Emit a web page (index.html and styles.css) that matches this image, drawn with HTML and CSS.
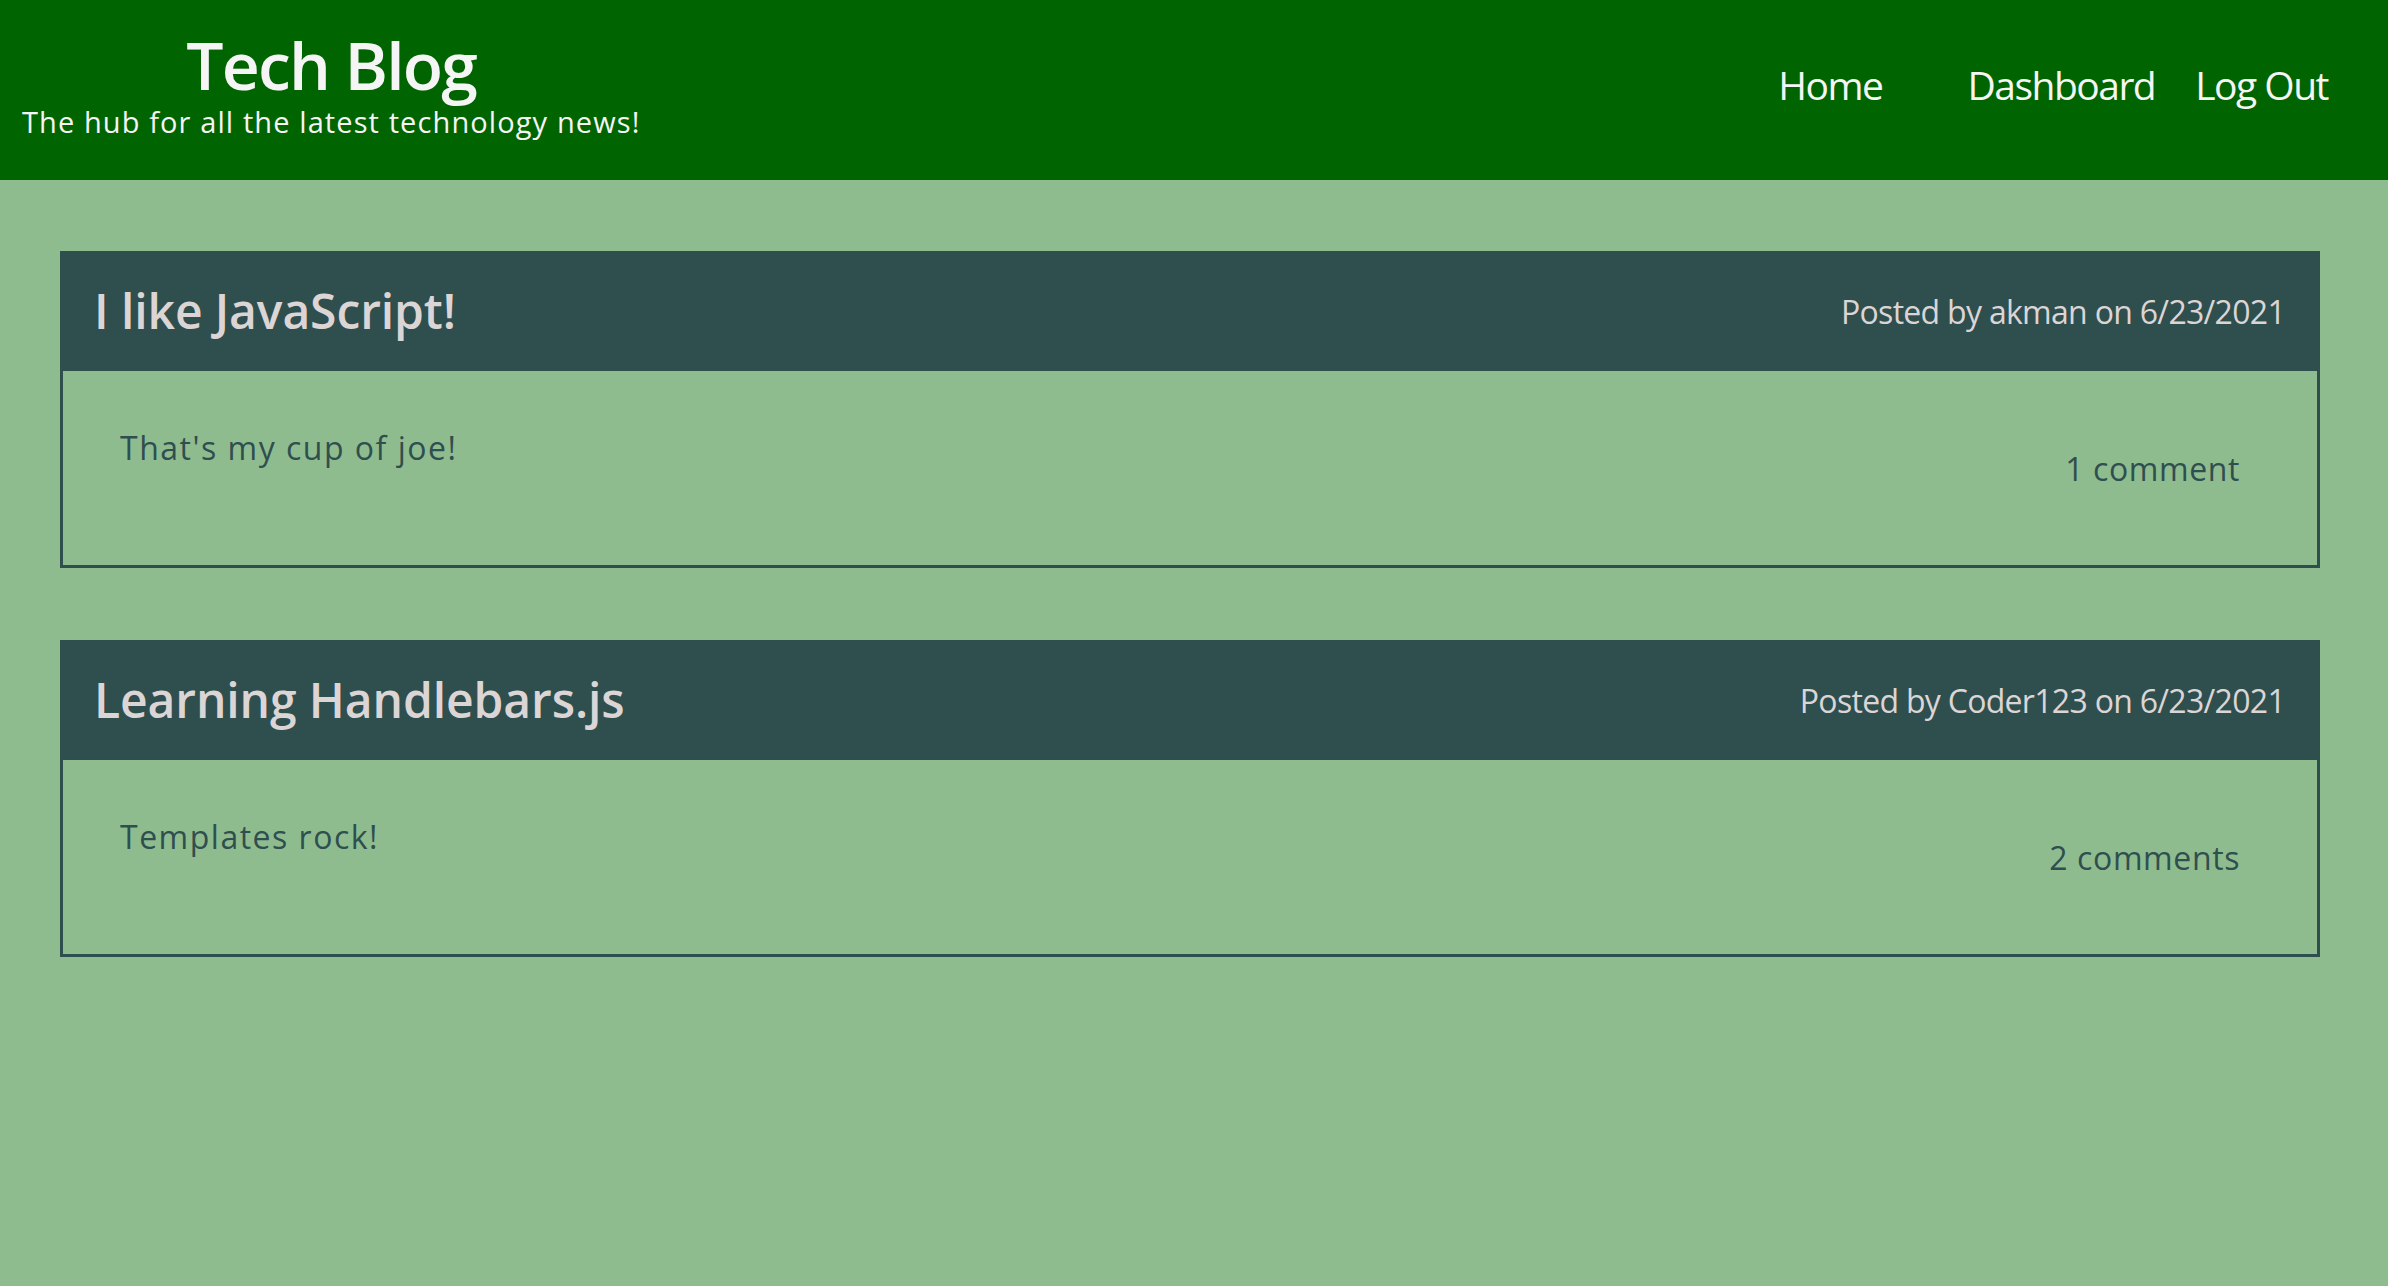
FILE: index.html
```html
<!DOCTYPE html>
<html lang="en">
<head>
<meta charset="utf-8">
<title>Tech Blog</title>
<link rel="stylesheet" href="styles.css">
</head>
<body>
<header class="site-header">
  <div class="brand">
    <h1 class="brand-title">Tech Blog</h1>
    <p class="brand-tagline">The hub for all the latest technology news!</p>
  </div>
  <nav class="nav">
    <a class="nav-link nav-home" href="#">Home</a>
    <a class="nav-link nav-dash" href="#">Dashboard</a>
    <a class="nav-link" href="#">Log Out</a>
  </nav>
</header>
<main class="posts">
  <article class="post">
    <div class="post-head">
      <h2 class="post-title">I like JavaScript!</h2>
      <span class="post-meta">Posted by akman on 6/23/2021</span>
    </div>
    <div class="post-body">
      <p class="post-text">That's my cup of joe!</p>
      <span class="post-comments">1 comment</span>
    </div>
  </article>
  <article class="post">
    <div class="post-head">
      <h2 class="post-title">Learning Handlebars.js</h2>
      <span class="post-meta">Posted by Coder123 on 6/23/2021</span>
    </div>
    <div class="post-body">
      <p class="post-text">Templates rock!</p>
      <span class="post-comments">2 comments</span>
    </div>
  </article>
</main>
</body>
</html>
```
FILE: styles.css
```css
* { box-sizing: border-box; }
html, body { margin: 0; padding: 0; }
body {
  background: #8fbc8f;
  font-family: "Open Sans", Lato, sans-serif;
  min-height: 1286px;
}
.site-header {
  height: 180px;
  background: #006400;
  color: #f5f5f5;
  display: flex;
  justify-content: space-between;
  align-items: flex-start;
  padding: 0 60px 0 22px;
}
.brand {
  text-align: center;
  padding-top: 31px;
}
.brand-title {
  margin: 0;
  font-size: 66px;
  line-height: 66px;
  font-weight: 600;
  letter-spacing: -1.8px;
}
.brand-tagline {
  margin: 10px 0 0;
  font-size: 29px;
  line-height: 29px;
  letter-spacing: 1.1px;
}
.nav {
  display: flex;
  padding-top: 65px;
}
.nav-link {
  color: #f5f5f5;
  text-decoration: none;
  font-size: 39px;
  line-height: 39px;
  letter-spacing: -1.5px;
}
.nav-home { margin-right: 85px; }
.nav-dash { margin-right: 40px; }
.posts {
  padding: 71px 68px 0 60px;
  display: flex;
  flex-direction: column;
  gap: 72px;
}
.post {
  border: 3px solid #2f4f4f;
}
.post-head {
  background: #2f4f4f;
  height: 117px;
  display: flex;
  justify-content: space-between;
  align-items: flex-start;
  padding: 33px 32px 0 31px;
  color: #dcd5d5;
}
.post-title {
  margin: 0;
  font-size: 48px;
  line-height: 48px;
  font-weight: 600;
  letter-spacing: -0.1px;
}
.post-meta {
  margin-top: 9px;
  font-size: 32px;
  line-height: 32px;
  letter-spacing: -0.7px;
}
.post-body {
  height: 194px;
  display: flex;
  justify-content: space-between;
  align-items: flex-start;
  padding: 61px 77px 0 57px;
  color: #2f4f4f;
}
.post-text {
  margin: 0;
  font-size: 32px;
  line-height: 32px;
  letter-spacing: 1.5px;
}
.post-comments {
  margin-top: 21px;
  font-size: 32px;
  line-height: 32px;
  letter-spacing: 0.6px;
}
```
